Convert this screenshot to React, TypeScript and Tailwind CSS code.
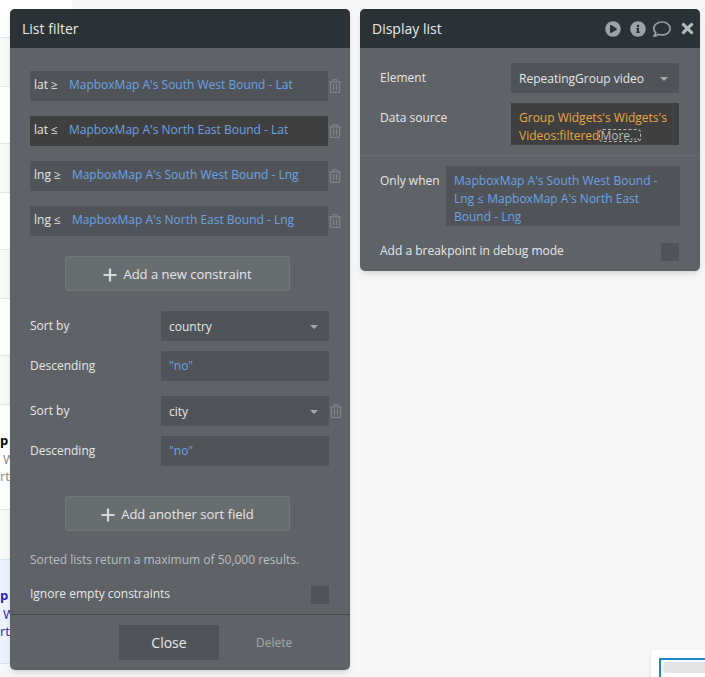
import { FaPlayCircle, FaInfoCircle, FaRegComment, FaTimes, FaRegTrashAlt } from 'react-icons/fa'

const font = { fontFamily: '"Open Sans", sans-serif' }

// rows of the page that sits behind the editor panels
const bgRows = [
  { h: 'h-[38px]', bg: 'bg-white' },
  { h: 'h-[49px]', bg: 'bg-[#f8f8f8]' },
  { h: 'h-[57px]', bg: 'bg-white' },
  { h: 'h-[49px]', bg: 'bg-[#f8f8f8]' },
  { h: 'h-[57px]', bg: 'bg-white' },
  { h: 'h-[49px]', bg: 'bg-[#f8f8f8]' },
  { h: 'h-[57px]', bg: 'bg-white' },
  { h: 'h-[49px]', bg: 'bg-[#f8f8f8]' },
]

function Trash() {
  return <FaRegTrashAlt className="text-[14px] text-[#7d8387]" />
}

function Caret() {
  return <div className="w-0 h-0 border-x-[4px] border-x-transparent border-t-[4px] border-t-[#a3a7aa]" />
}

function Plus() {
  return (
    <svg width="14" height="14" viewBox="0 0 14 14" className="shrink-0">
      <path d="M7 0.5v13M0.5 7h13" stroke="#d6d8d9" strokeWidth="2.2" />
    </svg>
  )
}

function Constraint({ op, text, dark }: { op: string; text: string; dark?: boolean }) {
  return (
    <div className="flex items-center">
      <div className={`w-[298px] h-[30px] flex items-center pl-1 pb-[2px] text-[12px] ${dark ? 'bg-[#403f3f]' : 'bg-[#505458]'}`}>
        <span className="text-[#e6e7e8] mr-[11px]">{op}</span>
        <span className="text-[#6ba3e5] whitespace-nowrap">{text}</span>
      </div>
      <Trash />
    </div>
  )
}

function SortRow({ label, value, trash }: { label: string; value: string; trash?: boolean }) {
  return (
    <div className="flex items-center h-[30px]">
      <span className="w-[131px] text-[12px] text-[#e6e7e8]">{label}</span>
      <div className="w-[168px] h-[30px] bg-[#505458] flex items-center justify-between pl-2 pr-[11px] pt-[1px] text-[12px] text-[#e6e7e8]">
        {value}
        <Caret />
      </div>
      {trash && <Trash />}
    </div>
  )
}

function DescRow() {
  return (
    <div className="flex items-center h-[30px]">
      <span className="w-[131px] text-[12px] text-[#e6e7e8]">Descending</span>
      <div className="w-[168px] h-[30px] bg-[#505458] flex items-center pl-2 text-[12px] text-[#6ba3e5]">"no"</div>
    </div>
  )
}

function AddButton({ label }: { label: string }) {
  return (
    <div className="ml-[35px] w-[225px] h-[35px] bg-[#686d70] border border-[#72777a] rounded-[2px] flex items-center justify-center gap-[6px] pt-[2px] text-[13px] text-[#e6e7e8]">
      <Plus />
      {label}
    </div>
  )
}

export default function App() {
  return (
    <div className="relative w-[705px] h-[677px] overflow-hidden bg-[#f6f6f6]" style={font}>
      {/* page behind the panels */}
      <div className="w-[72px] flex flex-col">
        {bgRows.map((r, i) => (
          <div key={i} className={`${r.h} ${r.bg} border-b border-[#e6e6e6]`} />
        ))}
        <div className="h-[105px] bg-white border-b border-[#e6e6e6] text-[13px] leading-[17px] pt-[27px]">
          <div className="font-bold text-black mb-[2px]">p</div>
          <div className="text-[#888] pl-[3px]">W</div>
          <div className="text-[#888]">rt</div>
        </div>
        <div className="h-[49px] bg-[#f8f8f8]" />
        <div className="h-[105px] bg-[#edf3fe] border-y border-[#d8e3f5] text-[13px] leading-[17px] pt-[27px]">
          <div className="font-bold text-[#2222bb] mb-[2px]">p</div>
          <div className="text-[#2222bb] pl-[3px]">W</div>
          <div className="text-[#2222bb]">rt</div>
        </div>
      </div>

      {/* List filter panel */}
      <div className="absolute left-[10px] top-[9px] w-[340px] h-[661px] rounded-[5px] overflow-hidden bg-[#5f6367] shadow-md flex flex-col">
        <div className="h-[39px] shrink-0 bg-[#2b3235] flex items-center pl-3 text-[14px] text-[#e9eaea]">List filter</div>
        <div className="pl-5 pt-[23px] flex flex-col">
          <div className="flex flex-col gap-[15px]">
            <Constraint op="lat ≥" text="MapboxMap A's South West Bound - Lat" />
            <Constraint op="lat ≤" dark text="MapboxMap A's North East Bound - Lat" />
            <Constraint op="lng ≥" text="MapboxMap A's South West Bound - Lng" />
            <Constraint op="lng ≤" text="MapboxMap A's North East Bound - Lng" />
          </div>
          <div className="mt-[20px]"><AddButton label="Add a new constraint" /></div>
          <div className="mt-[20px] flex flex-col gap-[10px]">
            <SortRow label="Sort by" value="country" />
            <DescRow />
          </div>
          <div className="mt-[15px] flex flex-col gap-[10px]">
            <SortRow label="Sort by" value="city" trash />
            <DescRow />
          </div>
          <div className="mt-[30px]"><AddButton label="Add another sort field" /></div>
          <div className="mt-[20px] text-[12px] leading-[18px] text-[#bcbfc1]">Sorted lists return a maximum of 50,000 results.</div>
          <div className="mt-[17px] flex items-center w-[299px] justify-between">
            <span className="text-[12px] text-[#e6e7e8] -mt-[2px]">Ignore empty constraints</span>
            <div className="w-[18px] h-[18px] bg-[#505458]" />
          </div>
        </div>
        <div className="mt-[10px] border-t border-[#464849] flex items-center pl-[109px] pt-[10px]">
          <div className="w-[100px] h-[35px] bg-[#505458] flex items-center justify-center text-[14px] text-[#e6e7e8]">Close</div>
          <span className="ml-[37px] text-[12px] text-[#a5a9ab]">Delete</span>
        </div>
      </div>

      {/* Display list panel */}
      <div className="absolute left-[360px] top-[9px] w-[340px] h-[262px] rounded-[5px] overflow-hidden bg-[#5f6367] shadow-md flex flex-col">
        <div className="h-[39px] shrink-0 bg-[#2b3235] flex items-center pl-3 pr-[4px] text-[14px] text-[#e9eaea]">
          <span className="flex-1">Display list</span>
          <FaPlayCircle className="text-[16px] text-[#9aa3a6]" />
          <FaInfoCircle className="text-[16px] text-[#9aa3a6] ml-[9px]" />
          <FaRegComment className="text-[18px] text-[#9aa3a6] ml-[7px]" />
          <FaTimes className="text-[17px] text-[#b4babc] ml-[8px]" />
        </div>
        <div className="pl-5 pt-[15px]">
          <div className="flex items-center">
            <span className="w-[131px] text-[12px] text-[#e6e7e8]">Element</span>
            <div className="w-[168px] h-[30px] bg-[#505458] flex items-center justify-between pl-2 pr-[11px] pt-[1px] text-[12px] text-[#e6e7e8]">
              RepeatingGroup video
              <Caret />
            </div>
          </div>
          <div className="flex mt-[10px]">
            <span className="w-[131px] text-[12px] text-[#e6e7e8] leading-[18px] pt-[6px]">Data source</span>
            <div className="w-[168px] h-[42px] bg-[#403f3f] pl-2 pt-[6px] text-[12px] leading-[18px] text-[#e8a93c] overflow-hidden">
              Group Widgets's Widgets's Videos:filtered
              <span className="text-[#b9bbbc] border border-dashed border-[#b9bbbc] rounded-[4px] text-[12px] leading-[11px] inline-block">More...</span>
            </div>
          </div>
        </div>
        <div className="mt-[10px] border-t border-[#686c70] pl-5 pt-[10px]">
          <div className="flex">
            <span className="w-[66px] text-[12px] text-[#e6e7e8] leading-[18px] pt-[6px] whitespace-nowrap">Only when</span>
            <div className="w-[234px] h-[60px] bg-[#505458] px-2 pt-[6px] text-[12px] leading-[18px] text-[#6ba3e5]">
              MapboxMap A's South West Bound - Lng ≤ MapboxMap A's North East Bound - Lng
            </div>
          </div>
          <div className="mt-[17px] flex items-center w-[299px] justify-between">
            <span className="text-[12px] text-[#e6e7e8] -mt-[2px]">Add a breakpoint in debug mode</span>
            <div className="w-[18px] h-[18px] bg-[#505458]" />
          </div>
        </div>
      </div>

      {/* corner of a widget peeking in at the bottom */}
      <div className="absolute left-[651px] top-[650px] w-[54px] h-[27px] bg-white rounded-tl-[3px] pl-2 pt-2 shadow-sm">
        <div className="h-[19px] border-l-[2px] border-t-[2px] border-[#1f87c4] pl-[2px] pt-[2px]">
          <div className="h-[11px] bg-[#e3e3e3] rounded-l-[4px]" />
        </div>
      </div>
    </div>
  )
}
